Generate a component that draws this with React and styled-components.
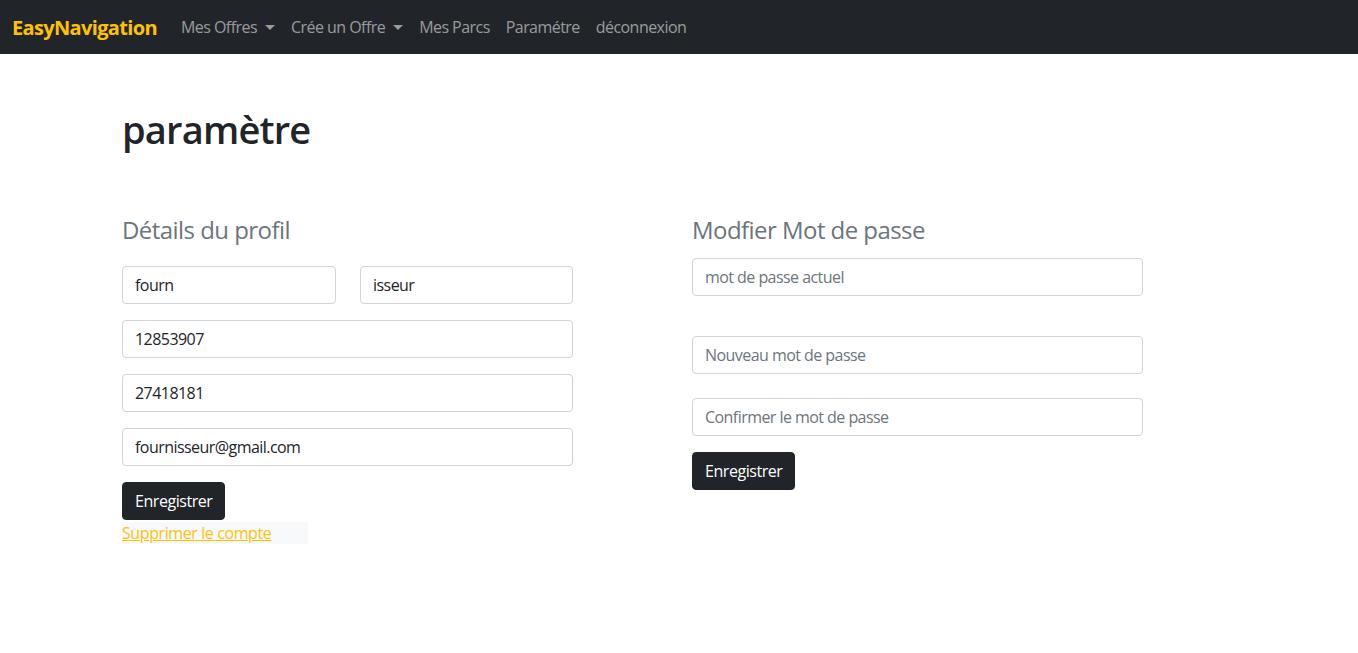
import styled, { createGlobalStyle } from "styled-components";

const GlobalStyle = createGlobalStyle`
  * { box-sizing: border-box; }
  body {
    margin: 0;
    background: #fff;
    color: #212529;
    font-family: "Open Sans", "Noto Sans", sans-serif;
    font-size: 16px;
  }
`;

const App = () => {
  return (
    <>
      <GlobalStyle />
      <NavBar>
        <Brand>EasyNavigation</Brand>
        <NavLink>Mes Offres<Caret /></NavLink>
        <NavLink>Crée un Offre<Caret /></NavLink>
        <NavLink>Mes Parcs</NavLink>
        <NavLink>Paramétre</NavLink>
        <NavLink>déconnexion</NavLink>
      </NavBar>
      <Main>
        <Title>paramètre</Title>
        <Columns>
          <LeftCol>
            <SectionTitle gap={22}>Détails du profil</SectionTitle>
            <Pair>
              <Input defaultValue="fourn" />
              <Input defaultValue="isseur" />
            </Pair>
            <Input mt={16} defaultValue="12853907" />
            <Input mt={16} defaultValue="27418181" />
            <Input mt={16} defaultValue="fournisseur@gmail.com" />
            <DarkButton mt={16}>Enregistrer</DarkButton>
            <DeleteBox>
              <DeleteLink href="#">Supprimer le compte</DeleteLink>
            </DeleteBox>
          </LeftCol>
          <RightCol>
            <SectionTitle gap={14}>Modfier Mot de passe</SectionTitle>
            <Input type="password" placeholder="mot de passe actuel" />
            <Input mt={40} type="password" placeholder="Nouveau mot de passe" />
            <Input mt={24} type="password" placeholder="Confirmer le mot de passe" />
            <DarkButton mt={16}>Enregistrer</DarkButton>
          </RightCol>
        </Columns>
      </Main>
    </>
  );
};

export default App;

const NavBar = styled.nav`
  display: flex;
  align-items: center;
  height: 54px;
  padding: 0 12px;
  background-color: #212529;
`;

const Brand = styled.div`
  font-size: 20px;
  font-weight: 700;
  color: #ffc107;
  margin-right: 16px;
  letter-spacing: -0.65px;
`;

const NavLink = styled.div`
  display: flex;
  align-items: center;
  padding: 0 8px;
  font-size: 16px;
  color: rgba(255, 255, 255, 0.55);
  letter-spacing: -0.55px;
`;

const Caret = styled.span`
  display: inline-block;
  margin-left: 8px;
  border-top: 5px solid rgba(255, 255, 255, 0.55);
  border-left: 5px solid transparent;
  border-right: 5px solid transparent;
`;

const Main = styled.main`
  padding: 51px 122px 0;
`;

const Title = styled.h1`
  margin: 0;
  font-size: 38px;
  font-weight: 600;
  line-height: 48px;
  color: #212529;
  letter-spacing: -0.8px;
`;

const Columns = styled.div`
  display: flex;
  margin-top: 62px;
`;

const LeftCol = styled.div`
  display: flex;
  flex-direction: column;
  align-items: flex-start;
  width: 451px;
  margin-right: 119px;
`;

const RightCol = styled.div`
  display: flex;
  flex-direction: column;
  align-items: flex-start;
  width: 451px;
`;

const SectionTitle = styled.h4`
  margin: 0 0 ${(p) => p.gap}px;
  font-size: 24px;
  font-weight: 400;
  line-height: 29px;
  color: #6c757d;
  letter-spacing: -0.55px;
`;

const Pair = styled.div`
  display: grid;
  grid-template-columns: 214px 213px;
  column-gap: 24px;
  width: 100%;
`;

const Input = styled.input`
  display: block;
  width: 100%;
  height: 38px;
  margin-top: ${(p) => p.mt || 0}px;
  padding: 6px 12px;
  font-family: inherit;
  font-size: 16px;
  color: #212529;
  background: #fff;
  border: 1px solid #ced4da;
  border-radius: 4px;
  outline: none;
  letter-spacing: -0.55px;

  &::placeholder {
    color: #6c757d;
    opacity: 1;
  }
`;

const DarkButton = styled.button`
  margin-top: ${(p) => p.mt || 0}px;
  height: 38px;
  padding: 0 12px;
  font-family: inherit;
  font-size: 16px;
  color: #fff;
  background-color: #212529;
  border: 1px solid #212529;
  border-radius: 4px;
  letter-spacing: -0.45px;
`;

const DeleteBox = styled.div`
  width: 186px;
  height: 22px;
  margin-top: 2px;
  background-color: #f8f9fa;
`;

const DeleteLink = styled.a`
  font-size: 16px;
  line-height: 20px;
  color: #ffc107;
  text-decoration: underline;
  letter-spacing: -0.4px;
`;
